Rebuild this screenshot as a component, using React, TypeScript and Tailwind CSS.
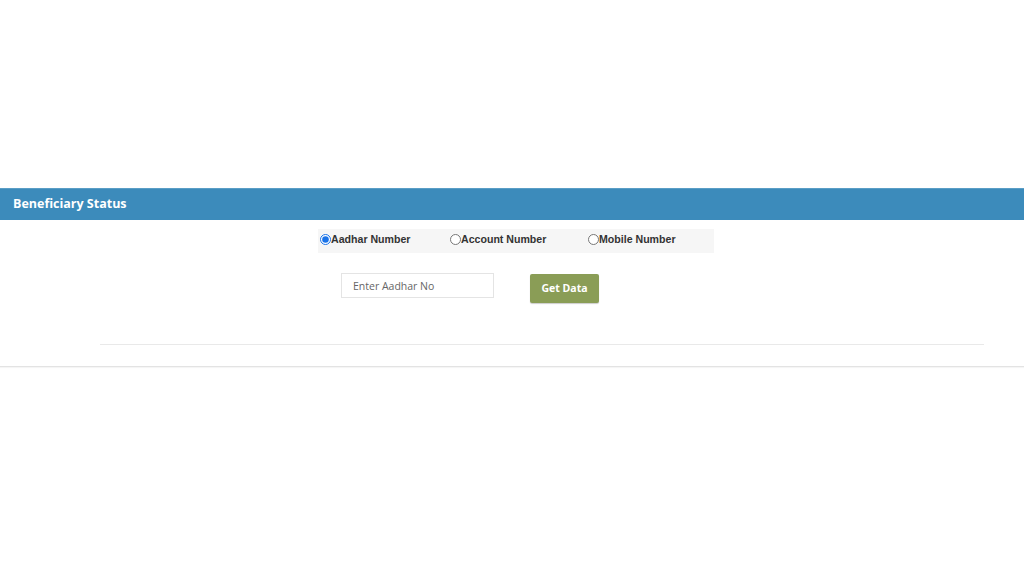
import { useState } from 'react'

const options = [
  { id: 'aadhar', label: 'Aadhar Number', w: 'w-[130px]' },
  { id: 'account', label: 'Account Number', w: 'w-[138px]' },
  { id: 'mobile', label: 'Mobile Number', w: 'w-[126px]' },
]

export default function App() {
  const [mode, setMode] = useState('aadhar')

  return (
    <div className="h-[576px] w-[1024px] bg-white font-['Open_Sans',sans-serif]">
      <div className="h-[188px]" />
      <div className="flex h-[32px] items-center bg-[#3c8bbb] px-[13px] border-t border-[#5a9ec6]">
        <h1 className="text-[12.5px] font-bold text-white">Beneficiary Status</h1>
      </div>
      <div className="flex flex-col items-center border-b border-[#e3e3e3] shadow-[0_1px_1px_rgba(0,0,0,0.04)]">
        <div className="mt-[9px] ml-[8px] flex h-[24px] w-[396px] items-center bg-[#f6f6f6] pb-[3px] pl-[2px] font-['Liberation_Sans',Arial,sans-serif] text-[10.6px] font-bold text-[#333]">
          {options.map((o) => (
            <label key={o.id} className={`flex items-center ${o.w}`}>
              <input
                type="radio"
                name="mode"
                checked={mode === o.id}
                onChange={() => setMode(o.id)}
                className="m-0 h-[11px] w-[11px] accent-[#1a73e8]"
              />
              <span>{o.label}</span>
            </label>
          ))}
        </div>
        <div className="mt-[20px] ml-[-84px] flex items-start gap-[36px]">
          <input
            placeholder="Enter Aadhar No"
            className="h-[25px] w-[153px] border border-[#e4e4e4] px-[11px] text-[10.5px] text-[#555] placeholder:text-[#666] outline-none"
          />
          <button className="mt-[1px] h-[29px] w-[69px] rounded-[2px] bg-[#8a9d56] text-[10.5px] font-bold text-white shadow-[0_1px_1px_rgba(0,0,0,0.2)]">
            Get Data
          </button>
        </div>
        <div className="mt-[41px] mb-[21px] h-px w-[884px] ml-[60px] bg-[#e9e9e9]" />
      </div>
    </div>
  )
}
